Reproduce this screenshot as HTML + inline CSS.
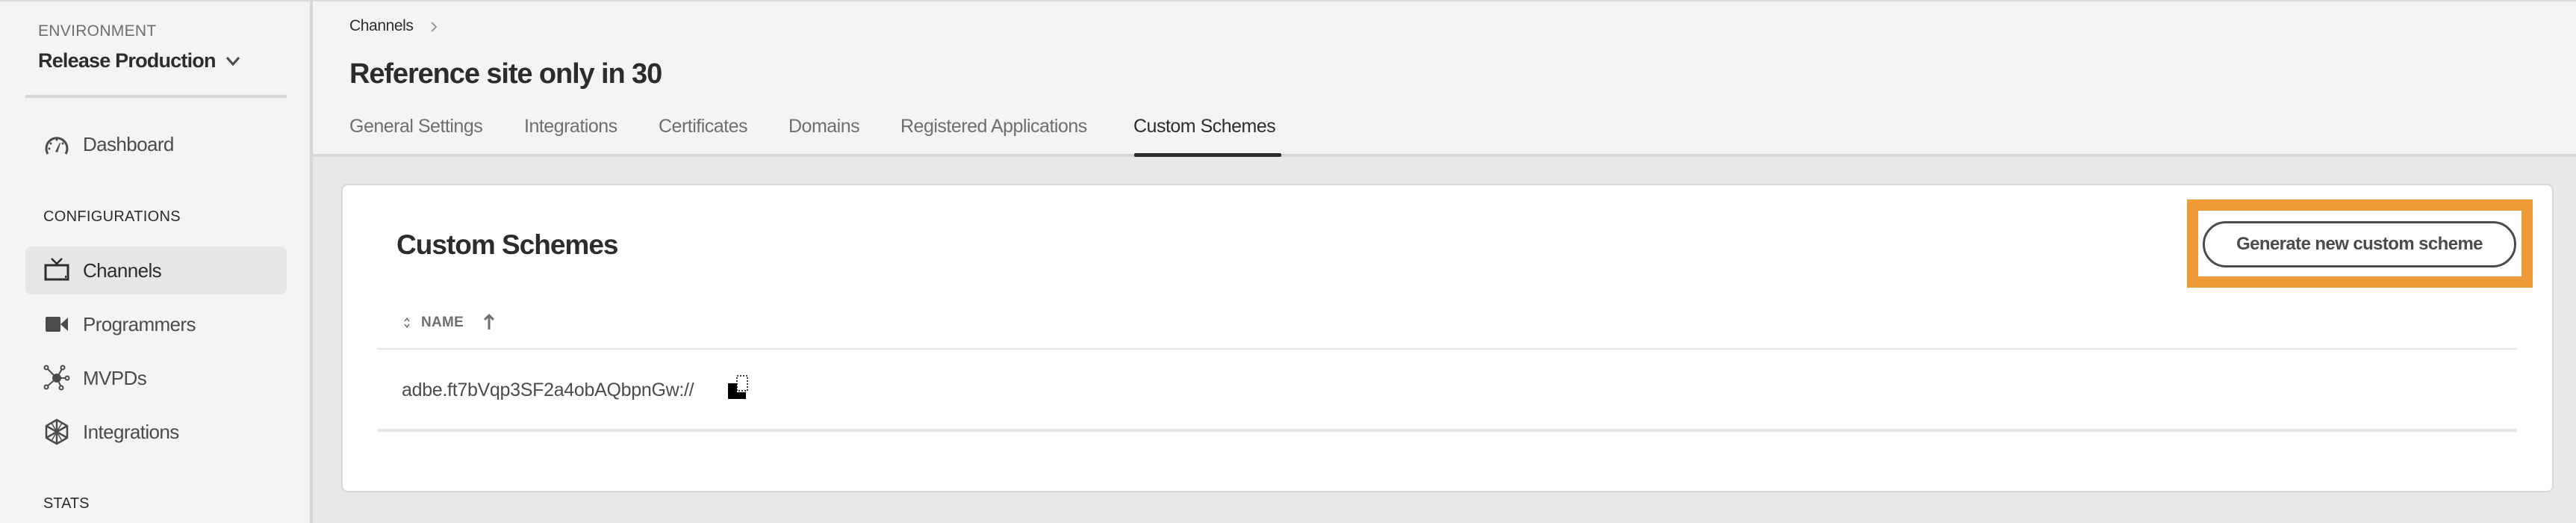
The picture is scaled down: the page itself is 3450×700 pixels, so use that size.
<!DOCTYPE html>
<html><head><meta charset="utf-8"><style>
*{margin:0;padding:0;box-sizing:border-box}
body{width:3450px;height:700px;background:#e8e8e8;font-family:"Liberation Sans",sans-serif;position:relative;overflow:hidden;color:#2c2c2c}
.a{position:absolute;white-space:nowrap}
#side{position:absolute;left:0;top:0;width:419px;height:700px;background:#f4f4f4;border-right:4px solid #d6d6d6;border-top:2px solid #dcdcdc}
#head{position:absolute;left:419px;top:0;width:3031px;height:210px;background:#f4f4f4;border-bottom:4px solid #d6d6d6;border-top:2px solid #dcdcdc}
.nav{font-size:26px;color:#4b4b4b;letter-spacing:-0.6px}
.tab{font-size:25px;color:#6e6e6e;letter-spacing:-0.5px;top:155px}
.ic{position:absolute}
</style></head><body>
<div id="side"></div>
<div class="a" style="left:51px;top:30px;font-size:21px;color:#6e6e6e;letter-spacing:0.3px">ENVIRONMENT</div>
<div class="a" style="left:51px;top:66px;font-size:27px;font-weight:bold;color:#2c2c2c;letter-spacing:-0.8px">Release Production</div>
<svg class="ic" style="left:301px;top:74px" width="22" height="16" viewBox="0 0 22 16"><path d="M3 3l8 9 8-9" fill="none" stroke="#4b4b4b" stroke-width="3"/></svg>
<div class="a" style="left:34px;top:127px;width:350px;height:4px;background:#d6d6d6"></div>

<svg class="ic" style="left:59px;top:179px" width="34" height="30" viewBox="0 0 34 30"><path d="M5 27A14 14 0 1 1 29 27" fill="none" stroke="#4b4b4b" stroke-width="3"/><path d="M15 24l6-12 1 1-4 12z" fill="#4b4b4b"/><circle cx="9" cy="13" r="1.5" fill="#4b4b4b"/><circle cx="17" cy="8" r="1.5" fill="#4b4b4b"/><circle cx="25" cy="13" r="1.5" fill="#4b4b4b"/><circle cx="7" cy="20" r="1.5" fill="#4b4b4b"/></svg>
<div class="a nav" style="left:111px;top:178px">Dashboard</div>
<div class="a" style="left:58px;top:279px;font-size:20px;color:#2c2c2c;letter-spacing:0.3px">CONFIGURATIONS</div>
<div class="a" style="left:34px;top:330px;width:350px;height:64px;background:#e6e6e6;border-radius:8px"></div>
<svg class="ic" style="left:59px;top:344px" width="34" height="32" viewBox="0 0 34 32"><path d="M10 2l7 7 7-7" fill="none" stroke="#2c2c2c" stroke-width="2.5"/><rect x="2" y="11" width="30" height="19" fill="none" stroke="#2c2c2c" stroke-width="3"/><rect x="28" y="25" width="2" height="3" fill="#2c2c2c"/></svg>
<div class="a nav" style="left:111px;top:347px;color:#2c2c2c">Channels</div>
<svg class="ic" style="left:60px;top:423px" width="32" height="22" viewBox="0 0 32 22"><rect x="1" y="1" width="20" height="20" rx="2" fill="#4b4b4b"/><path d="M21 11l10-9v18z" fill="#4b4b4b"/></svg>
<div class="a nav" style="left:111px;top:419px">Programmers</div>
<svg class="ic" style="left:58px;top:488px" width="36" height="36" viewBox="0 0 36 36" fill="none" stroke="#4b4b4b" stroke-width="2"><path d="M4 4l14 14M26 4l-8 14M18 18L4 30M18 18l6 12M18 18h14"/><circle cx="18" cy="18" r="5" fill="#4b4b4b"/><circle cx="4" cy="4" r="2.5" fill="#f4f4f4"/><circle cx="26" cy="4" r="2.5" fill="#f4f4f4"/><circle cx="4" cy="30" r="2.5" fill="#f4f4f4"/><circle cx="24" cy="31" r="2.5" fill="#f4f4f4"/><circle cx="32" cy="18" r="2.5" fill="#f4f4f4"/></svg>
<div class="a nav" style="left:111px;top:491px">MVPDs</div>
<svg class="ic" style="left:60px;top:560px" width="32" height="36" viewBox="0 0 32 36" fill="none" stroke="#4b4b4b" stroke-width="2.5"><path d="M16 2L30 10V26L16 34L2 26V10Z"/><path d="M16 2V34M2 10L30 26M30 10L2 26"/><path d="M9 6L23 30M23 6L9 30" stroke-width="1.5"/></svg>
<div class="a nav" style="left:111px;top:563px">Integrations</div>
<div class="a" style="left:58px;top:663px;font-size:20px;color:#2c2c2c">STATS</div>

<div id="head"></div>
<div class="a" style="left:468px;top:23px;font-size:21px;color:#2c2c2c;letter-spacing:-0.4px">Channels</div>
<svg class="ic" style="left:575px;top:27px" width="12" height="18" viewBox="0 0 12 18"><path d="M3 3l6 6-6 6" fill="none" stroke="#9a9a9a" stroke-width="2"/></svg>
<div class="a" style="left:468px;top:78px;font-size:38px;font-weight:bold;color:#2c2c2c;letter-spacing:-1.1px">Reference site only in 30</div>
<div class="a tab" style="left:468px">General Settings</div>
<div class="a tab" style="left:702px">Integrations</div>
<div class="a tab" style="left:882px">Certificates</div>
<div class="a tab" style="left:1056px">Domains</div>
<div class="a tab" style="left:1206px">Registered Applications</div>
<div class="a tab" style="left:1518px;color:#2c2c2c">Custom Schemes</div>
<div class="a" style="left:1519px;top:205px;width:197px;height:5px;background:#2c2c2c;border-radius:2px"></div>

<div class="a" style="left:457px;top:246px;width:2963px;height:413px;background:#fff;border:2px solid #d8d8d8;border-radius:9px"></div>
<div class="a" style="left:531px;top:307px;font-size:37px;font-weight:bold;color:#2c2c2c;letter-spacing:-1px">Custom Schemes</div>
<svg class="ic" style="left:540px;top:423px" width="10" height="18" viewBox="0 0 10 18"><path d="M2 7l3-4 3 4M2 11l3 4 3-4" fill="none" stroke="#6e6e6e" stroke-width="1.5"/></svg>
<div class="a" style="left:564px;top:421px;font-size:19px;font-weight:bold;color:#6e6e6e;letter-spacing:0.3px">NAME</div>
<svg class="ic" style="left:648px;top:419px" width="14" height="24" viewBox="0 0 14 24"><path d="M7 22V3M1 9l6-6 6 6" fill="none" stroke="#6e6e6e" stroke-width="3"/></svg>
<div class="a" style="left:505px;top:466px;width:2866px;height:2px;background:#e6e6e6"></div>
<div class="a" style="left:538px;top:508px;font-size:25px;color:#4b4b4b;letter-spacing:-0.3px">adbe.ft7bVqp3SF2a4obAQbpnGw://</div>
<svg class="ic" style="left:974px;top:501px" width="36" height="34" viewBox="0 0 36 34"><rect x="1" y="12" width="12" height="21" fill="#000"/><rect x="1" y="24" width="24" height="9" fill="#000"/><rect x="13" y="2" width="14" height="20" fill="#fff" stroke="#000" stroke-width="1.5" stroke-dasharray="2 2"/></svg>
<div class="a" style="left:505px;top:574px;width:2866px;height:4px;background:#e6e6e6"></div>

<div class="a" style="left:2929px;top:267px;width:463px;height:118px;border:15px solid #f09a37"></div>
<div class="a" style="left:2950px;top:296px;width:420px;height:62px;border:3px solid #4b4b4b;border-radius:31px;font-size:24px;font-weight:bold;color:#4b4b4b;text-align:center;line-height:56px;letter-spacing:-0.6px">Generate new custom scheme</div>
</body></html>
